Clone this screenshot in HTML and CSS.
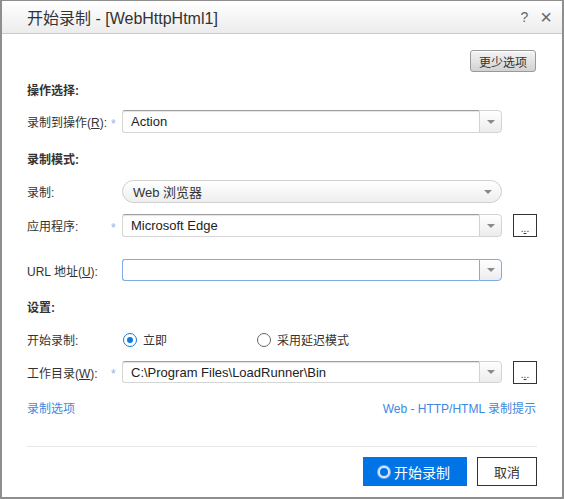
FILE: index.html
```html
<!DOCTYPE html>
<html>
<head>
<meta charset="utf-8">
<link rel="stylesheet" href="styles.css">
</head>
<body>
<div class="window">
  <div class="titlebar">
    <span class="title">开始录制 - [WebHttpHtml1]</span>
    <span class="tools"><span class="help">?</span><span class="close">×</span></span>
  </div>
  <div class="content">
    <div class="toprow"><button class="less">更少选项</button></div>

    <div class="heading h1">操作选择:</div>
    <div class="row r1">
      <span class="label">录制到操作(<u>R</u>):</span><span class="star">*</span>
      <div class="combo"><div class="field">Action</div><div class="drop"><i></i></div></div>
    </div>

    <div class="heading h2">录制模式:</div>
    <div class="row r2">
      <span class="label">录制:</span><span class="star"></span>
      <div class="pill">Web 浏览器<i></i></div>
    </div>
    <div class="row r3">
      <span class="label">应用程序:</span><span class="star">*</span>
      <div class="combo"><div class="field">Microsoft Edge</div><div class="drop"><i></i></div></div>
      <button class="dots">.<u>.</u>.</button>
    </div>
    <div class="row r4">
      <span class="label">URL 地址(<u>U</u>):</span><span class="star"></span>
      <div class="combo focus"><div class="field"></div><div class="drop"><i></i></div></div>
    </div>

    <div class="heading h3">设置:</div>
    <div class="row r5">
      <span class="label">开始录制:</span><span class="star"></span>
      <div class="radios">
        <span class="radio on"><b></b>立即</span>
        <span class="radio"><b></b>采用延迟模式</span>
      </div>
    </div>
    <div class="row r6">
      <span class="label">工作目录(<u>W</u>):</span><span class="star">*</span>
      <div class="combo"><div class="field">C:\Program Files\LoadRunner\Bin</div><div class="drop"><i></i></div></div>
      <button class="dots">.<u>.</u>.</button>
    </div>

    <div class="links"><a>录制选项</a><a>Web - HTTP/HTML 录制提示</a></div>
    <div class="sep"></div>
    <div class="buttons">
      <button class="primary"><span class="ring"></span>开始录制</button>
      <button class="cancel">取消</button>
    </div>
  </div>
</div>
</body>
</html>
```

FILE: styles.css
```css
* { box-sizing: border-box; }
html, body { margin: 0; padding: 0; }
body {
  width: 564px; height: 499px; overflow: hidden;
  font-family: "Liberation Sans", Arial, "Noto Sans CJK SC", sans-serif;
  color: #333;
  font-size: 12px;
}
.window {
  width: 564px; height: 499px;
  border: 2px solid #8e8e8e;
  border-top-width: 1px;
  background: #fff;
  display: flex; flex-direction: column;
}
.titlebar {
  height: 33px;
  background: linear-gradient(#ffffff, #ececec);
  border-bottom: 1px solid #c9c9c9;
  display: flex; align-items: center; justify-content: space-between;
  padding: 0 10px 0 25px;
}
.title { font-size: 16px; color: #333; }
.tools { display: flex; gap: 12px; align-items: center; color: #666; }
.help { font-size: 14px; }
.close { font-size: 20px; line-height: 1; font-weight: 300; }
.content {
  padding: 16px 25px 0 25px;
  display: flex; flex-direction: column;
}
.toprow { display: flex; justify-content: flex-end; height: 22px; }
.less {
  width: 66px; height: 22px; margin-right: 1px;
  font: inherit; font-size: 12px; color: #333;
  border: 1px solid #9a9a9a; border-radius: 3px;
  background: linear-gradient(#f4f4f4, #d2d2d2);
  box-shadow: inset 0 1px 0 #fff;
  padding: 0;
}
.heading { font-weight: bold; height: 16px; line-height: 16px; color: #333; }
.h1 { margin-top: 11px; }
.h2 { margin-top: 19px; }
.h3 { margin-top: 19px; }
.row { display: flex; align-items: center; height: 23px; }
.r1 { margin-top: 11px; }
.r2 { margin-top: 12px; }
.r3 { margin-top: 11px; }
.r4 { margin-top: 22px; height: 22px; }
.r5 { margin-top: 12px; }
.r6 { margin-top: 10px; height: 22px; }
.label { width: 84px; white-space: nowrap; }
.star { width: 11px; color: #8fb2ea; font-size: 12px; padding-left: 0; line-height: 1; padding-top: 4px; }
.combo { display: flex; width: 380px; height: 100%; }
.field {
  flex: 1; height: 100%;
  border: 1px solid #d6d6d6; border-top-color: #9e9e9e; border-right: none;
  border-radius: 3px 0 0 3px;
  padding-left: 8px;
  font-size: 13px; color: #222;
  display: flex; align-items: center;
  box-shadow: inset 0 1px 1px #e4e4e4;
}
.drop {
  width: 23px; height: 100%;
  border: 1px solid #d3d3d3;
  border-radius: 0 4px 4px 0;
  background: linear-gradient(#ffffff, #ececec);
  display: flex; align-items: center; justify-content: center;
}
.drop i, .pill i {
  width: 0; height: 0;
  border-left: 4px solid transparent; border-right: 4px solid transparent;
  border-top: 4px solid #8a8a8a;
}
.focus .field { border-color: #7eaae6; box-shadow: none; }
.focus .drop { border-color: #7eaae6; }
.pill {
  width: 380px; height: 100%;
  border: 1px solid #cfcfcf; border-radius: 12px;
  background: linear-gradient(#ffffff, #eeeeee);
  display: flex; align-items: center; justify-content: space-between;
  padding: 0 9px 0 10px;
  font-size: 13px; color: #333;
}
.dots {
  width: 24px; height: 23px; margin-left: 11px;
  border: 1px solid #333; background: #fff;
  font: inherit; font-size: 10px; line-height: 1; color: #333;
  padding: 6px 0 0 0; letter-spacing: 0;
}
.radios { display: flex; align-items: center; }
.radio { display: flex; align-items: center; width: 134px; color: #333; }
.radio b {
  width: 14px; height: 14px; border-radius: 50%;
  border: 1px solid #666; margin-right: 6px; margin-left: 1px;
  display: inline-block; position: relative;
}
.radio.on b { border-color: #1478e0; }
.radio.on b::after {
  content: ""; position: absolute; left: 3px; top: 3px;
  width: 6px; height: 6px; border-radius: 50%; background: #1478e0;
}
.links {
  margin-top: 18px; height: 16px; line-height: 16px;
  display: flex; justify-content: space-between; padding-right: 1px;
}
.links a { color: #3d89e0; }
.sep { margin-top: 29px; height: 1px; background: #e6e6e6; }
.buttons {
  margin-top: 10px; display: flex; justify-content: flex-end; gap: 10px;
}
.primary {
  width: 104px; height: 29px;
  background: #0074e6; color: #fff; border: none;
  font: inherit; font-size: 14px;
  display: flex; align-items: center; justify-content: center; gap: 4px;
  padding: 0 2px 0 0;
}
.primary .ring {
  width: 12px; height: 12px; border-radius: 50%;
  border: 2px solid #dbe9fb; background: #0074e6;
  box-shadow: 0 0 0 1px #7fb4f0;
}
.cancel {
  width: 60px; height: 29px;
  background: #fff; border: 1px solid #333;
  font: inherit; font-size: 13px; color: #333;
}
```
